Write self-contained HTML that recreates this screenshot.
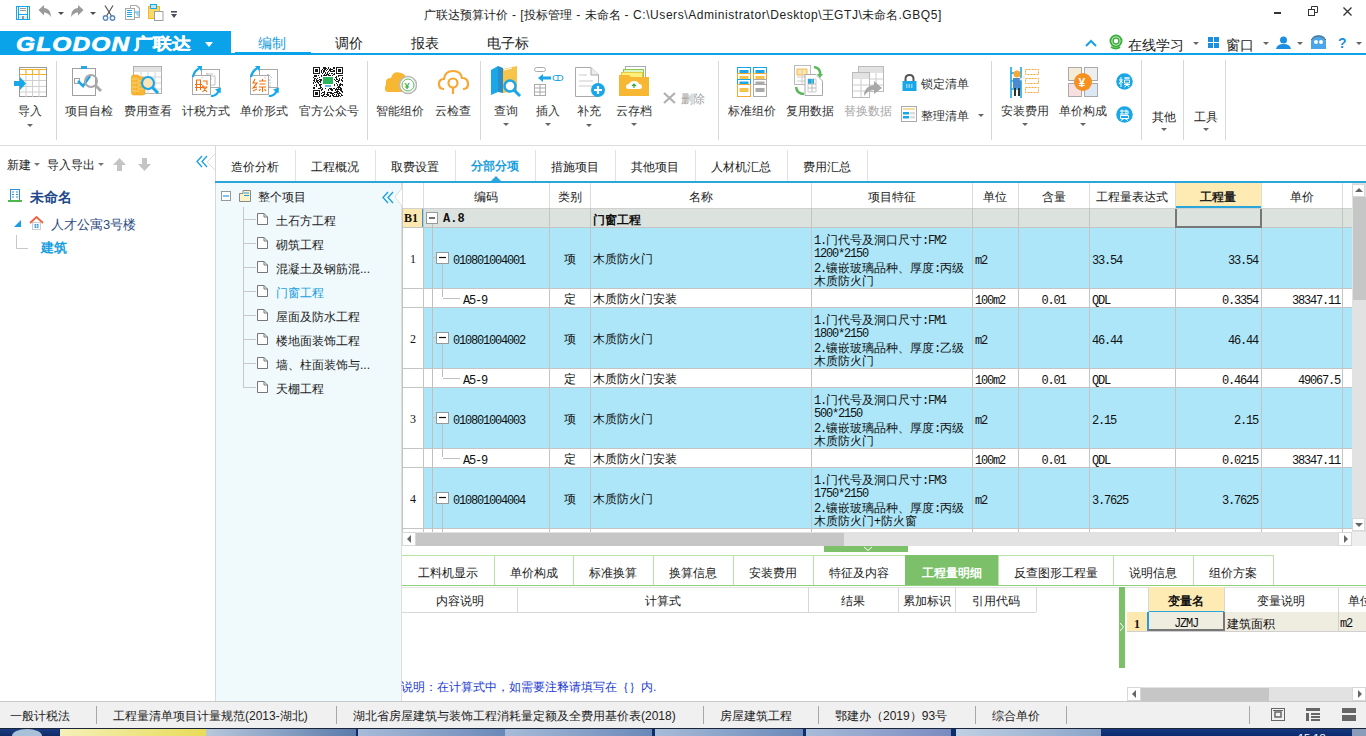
<!DOCTYPE html>
<html><head><meta charset="utf-8">
<style>
@font-face{font-family:"LSk";src:local("Liberation Sans");size-adjust:140%}
*{box-sizing:border-box}
html,body{margin:0;padding:0}
body{width:1366px;height:736px;position:relative;overflow:hidden;background:#fff;font-family:"Liberation Sans",sans-serif;font-size:12px;color:#222}
.a{position:absolute}
.t{position:absolute;white-space:nowrap;line-height:1}
.sep{position:absolute;width:1px;background:#d8d8d8}
.rb{position:absolute;top:104px;font-size:12px;color:#333;white-space:nowrap;line-height:12px;text-align:center}
.dd{position:absolute;width:0;height:0;border-left:3px solid transparent;border-right:3px solid transparent;border-top:3px solid #666}
.hl{position:absolute;height:1px;background:#c8c8c8}
.vl{position:absolute;width:1px;background:#c8c8c8}
.k{display:inline-block;width:1em;font-style:normal;text-align:center;font-family:"LSk","Liberation Sans",sans-serif}
</style></head><body>
<!-- TITLE BAR -->
<div class="a" style="left:0;top:0;width:1366px;height:31px;background:#fff"></div>
<div class="t" style="left:424px;top:8px;font-size:12px;color:#222;letter-spacing:0.57px"><i class="k">广</i><i class="k">联</i><i class="k">达</i><i class="k">预</i><i class="k">算</i><i class="k">计</i><i class="k">价</i> - [<i class="k">投</i><i class="k">标</i><i class="k">管</i><i class="k">理</i> - <i class="k">未</i><i class="k">命</i><i class="k">名</i> - C:\Users\Administrator\Desktop\<i class="k">王</i>GTJ\<i class="k">未</i><i class="k">命</i><i class="k">名</i>.GBQ5]</div>

<!-- TAB ROW -->
<div class="a" style="left:0;top:31px;width:231px;height:24px;background:#0aa3e9"></div>
<div class="a" style="left:0;top:53px;width:1366px;height:2px;background:#0aa3e9"></div>
<div class="a" style="left:235px;top:52px;width:76px;height:3px;background:#0aa3e9"></div>
<div class="t" style="left:258px;top:34px;font-size:14px;color:#1a9ee0"><i class="k">编</i><i class="k">制</i></div>
<div class="t" style="left:335px;top:34px;font-size:14px;color:#222"><i class="k">调</i><i class="k">价</i></div>
<div class="t" style="left:411px;top:34px;font-size:14px;color:#222"><i class="k">报</i><i class="k">表</i></div>
<div class="t" style="left:487px;top:34px;font-size:14px;color:#222"><i class="k">电</i><i class="k">子</i><i class="k">标</i></div>

<!-- RIBBON -->
<!-- quick access -->
<svg class="a" style="left:16px;top:6px" width="14" height="14" viewBox="0 0 14 14" shape-rendering="crispEdges"><rect x="0" y="0" width="14" height="14" fill="#12a8ec"/><rect x="1" y="1" width="12" height="12" fill="#fff"/><rect x="2" y="1" width="1" height="12" fill="#12a8ec"/><rect x="11" y="1" width="1" height="12" fill="#12a8ec"/><rect x="2" y="8" width="10" height="1" fill="#12a8ec"/><rect x="4" y="2" width="6" height="1" fill="#999"/><rect x="4" y="4" width="6" height="1" fill="#999"/><rect x="3" y="10" width="8" height="3" fill="#dbeefa"/><rect x="6" y="10" width="2" height="3" fill="#999"/></svg>
<svg class="a" style="left:38px;top:5px" width="34" height="14" viewBox="0 0 34 14"><path d="M0.5 5 L6 0 L6 3 Q13 3.5 13 12 Q10 7.5 6 7.5 L6 10.5 Z" fill="#9a9a9a"/><path d="M20 7 L26 7 L23 10 Z" fill="#4a4e5a"/></svg>
<svg class="a" style="left:70px;top:5px" width="34" height="14" viewBox="0 0 34 14"><path d="M13.5 5 L8 0 L8 3 Q1 3.5 1 12 Q4 7.5 8 7.5 L8 10.5 Z" fill="#9a9a9a"/><path d="M20 7 L26 7 L23 10 Z" fill="#4a4e5a"/></svg>
<svg class="a" style="left:102px;top:5px" width="14" height="16" viewBox="0 0 14 16"><path d="M3 0.5 L9.5 11 M11 0.5 L4.5 11" stroke="#555" stroke-width="1.2"/><circle cx="3.5" cy="13" r="2.2" fill="none" stroke="#5a86c0" stroke-width="1.4"/><circle cx="10.5" cy="13" r="2.2" fill="none" stroke="#5a86c0" stroke-width="1.4"/></svg>
<svg class="a" style="left:125px;top:4px" width="16" height="16" viewBox="0 0 16 16"><path d="M5.5 1.5 H12 L14.5 4 V13.5 H5.5 Z" fill="#fff" stroke="#a8a8a8"/><path d="M8 7 L14 7 L14 13 Z" fill="#8ad8f8"/><path d="M11.5 1.5 L14.5 4.5" stroke="#bbb" stroke-width="1.5"/><rect x="0.5" y="4.5" width="9" height="11" fill="#fff" stroke="#a8a8a8"/><path d="M2 6.5h5M2 8.5h5M2 10.5h5M2 12.5h5" stroke="#1aa7e8" stroke-width="1"/></svg>
<svg class="a" style="left:148px;top:4px" width="16" height="17" viewBox="0 0 16 17"><rect x="0.5" y="2.5" width="11" height="12" fill="#fcd86a" stroke="#f5b820"/><rect x="2.5" y="0.5" width="6" height="4" fill="#bfe8fa" stroke="#1aa7e8"/><rect x="6.5" y="7.5" width="8.5" height="9" fill="#fff" stroke="#a0a0a0"/></svg>
<svg class="a" style="left:171px;top:11px" width="6" height="7" viewBox="0 0 6 7"><rect x="0" y="0" width="6" height="1.6" fill="#4a4e5a"/><path d="M0 3 L6 3 L3 7 Z" fill="#4a4e5a"/></svg>

<!-- logo -->
<div class="t" style="left:16px;top:34px;font-size:20px;font-weight:bold;font-style:italic;color:#fff;letter-spacing:1px;transform-origin:0 0;transform:scaleX(1.22);-webkit-text-stroke:0.7px #fff">GLODON</div>
<div class="t" style="left:134px;top:34px;font-size:16px;font-weight:bold;color:#fff;transform-origin:0 0;transform:scaleX(1.18);-webkit-text-stroke:0.4px #fff"><i class="k">广</i><i class="k">联</i><i class="k">达</i></div>
<div class="dd" style="left:205px;top:42px;border-left-width:4px;border-right-width:4px;border-top:5px solid #fff"></div>

<!-- right side of tab row -->
<svg class="a" style="left:1085px;top:39px" width="12" height="8" viewBox="0 0 12 8"><path d="M1 7 L6 2 L11 7" fill="none" stroke="#1aa0e6" stroke-width="2"/></svg>
<svg class="a" style="left:1108px;top:34px" width="16" height="16" viewBox="0 0 16 16"><circle cx="8" cy="7" r="5.5" fill="none" stroke="#3cae3c" stroke-width="2"/><circle cx="8" cy="7" r="3" fill="none" stroke="#3cae3c" stroke-width="1.5"/><path d="M3 13 Q8 16 12 13" fill="none" stroke="#3cae3c" stroke-width="2"/></svg>
<div class="t" style="left:1128px;top:36px;font-size:14px;color:#222"><i class="k">在</i><i class="k">线</i><i class="k">学</i><i class="k">习</i></div>
<div class="dd" style="left:1193px;top:42px"></div>
<svg class="a" style="left:1208px;top:37px" width="12" height="11" viewBox="0 0 12 11"><rect x="0" y="0" width="5" height="5" fill="#1a8fe0"/><rect x="6" y="0" width="5" height="5" fill="#1a8fe0"/><rect x="0" y="6" width="5" height="5" fill="#1a8fe0"/><rect x="6" y="6" width="5" height="5" fill="#1a8fe0"/></svg>
<div class="t" style="left:1226px;top:36px;font-size:14px;color:#222"><i class="k">窗</i><i class="k">口</i></div>
<div class="dd" style="left:1263px;top:42px"></div>
<svg class="a" style="left:1276px;top:36px" width="15" height="13" viewBox="0 0 15 13"><circle cx="7.5" cy="4" r="3.5" fill="#1a8fe0"/><path d="M0 13 Q1 8 7.5 8 Q14 8 15 13 Z" fill="#1a8fe0"/></svg>
<div class="dd" style="left:1297px;top:42px"></div>
<svg class="a" style="left:1310px;top:34px" width="17" height="16" viewBox="0 0 17 16"><path d="M1 8 Q1 1 8.5 1 Q16 1 16 8 L16 15 L1 15 Z" fill="#4aa6e8"/><circle cx="6" cy="8" r="2" fill="#fff"/><circle cx="11" cy="8" r="2" fill="#fff"/><path d="M1 6 Q8.5 -2 16 6" fill="none" stroke="#666" stroke-width="1"/></svg>
<div class="t" style="left:1338px;top:36px;font-size:14px;color:#1a8fe0;font-weight:bold">?</div>
<div class="dd" style="left:1356px;top:42px"></div>

<!-- window controls -->
<div class="a" style="left:1274px;top:12px;width:7px;height:2px;background:#333"></div>
<svg class="a" style="left:1308px;top:6px" width="10" height="10" viewBox="0 0 10 10"><rect x="0.5" y="3.5" width="6" height="6" fill="none" stroke="#333"/><path d="M3.5 3.5V0.5H9.5V6.5H6.5" fill="none" stroke="#333"/></svg>
<svg class="a" style="left:1343px;top:7px" width="9" height="9" viewBox="0 0 9 9"><path d="M0.5 0.5L8.5 8.5M8.5 0.5L0.5 8.5" stroke="#333" stroke-width="1.3"/></svg>

<!-- ribbon separators -->
<div class="sep" style="left:56px;top:61px;height:79px"></div>
<div class="sep" style="left:367px;top:61px;height:79px"></div>
<div class="sep" style="left:480px;top:61px;height:79px"></div>
<div class="sep" style="left:718px;top:61px;height:79px"></div>
<div class="sep" style="left:991px;top:61px;height:79px"></div>
<div class="sep" style="left:1141px;top:60px;height:80px"></div>
<div class="sep" style="left:1183px;top:60px;height:80px"></div>
<div class="sep" style="left:1225px;top:60px;height:80px"></div>

<!-- ribbon items -->
<svg class="a" style="left:14px;top:67px" width="33" height="30" viewBox="0 0 33 30"><rect x="5.5" y="0.5" width="27" height="29" fill="#fff" stroke="#9a9a9a"/><path d="M6 7.5H32M6 13.5H32M6 19.5H32M6 25H32M12 7V30M18.5 7V30M25 7V30" stroke="#cfcfcf"/><path d="M6 2.5H32M6 7.5H32M12 2V8M18.5 2V8M25 2V8" stroke="#f5b12a" stroke-width="1.2"/><path d="M0 14 L6 14 L6 10 L12 16.5 L6 23 L6 19 L0 19 Z" fill="#18a7e8"/></svg>
<div class="rb" style="left:18px"><i class="k">导</i><i class="k">入</i></div>
<div class="dd" style="left:27px;top:124px"></div>

<svg class="a" style="left:72px;top:65px" width="32" height="32" viewBox="0 0 32 32"><rect x="0.5" y="3.5" width="23" height="27" fill="#fff" stroke="#a0a0a0"/><path d="M9 1 H15 V4 H9 Z" fill="#2aa6e6"/><rect x="2.5" y="13.5" width="5" height="5" fill="none" stroke="#a0a0a0"/><path d="M6 16 L11 21 L18 11" fill="none" stroke="#1aa7e8" stroke-width="2.5"/><circle cx="19" cy="16" r="6" fill="none" stroke="#a8a8a8" stroke-width="2"/><path d="M23 20 L29 26" stroke="#a8a8a8" stroke-width="3"/></svg>
<div class="rb" style="left:65px"><i class="k">项</i><i class="k">目</i><i class="k">自</i><i class="k">检</i></div>

<svg class="a" style="left:131px;top:66px" width="32" height="31" viewBox="0 0 32 31"><rect x="2.5" y="0.5" width="28" height="27" fill="#fff" stroke="#b0b0b0"/><rect x="3" y="1" width="27" height="5" fill="#e2e2e2"/><path d="M3 11H30M3 17H30M3 23H30M10 6V28M17 6V28M24 6V28" stroke="#d4d4d4"/><g fill="#f7b733" stroke="#f0a020" stroke-width="0.6"><rect x="0.5" y="9" width="8" height="20" rx="2"/><rect x="6" y="11" width="8" height="18" rx="2"/></g><path d="M1 13H8M1 17H8M1 21H8M1 25H8M6.5 15H13.5M6.5 19H13.5M6.5 23H13.5" stroke="#fcd98a" stroke-width="0.8"/><circle cx="17" cy="17" r="6" fill="#fde5b8" stroke="#1aa7e8" stroke-width="2.2"/><path d="M21 21 L27 27" stroke="#1aa7e8" stroke-width="3"/></svg>
<div class="rb" style="left:124px"><i class="k">费</i><i class="k">用</i><i class="k">查</i><i class="k">看</i></div>

<svg class="a" style="left:192px;top:66px" width="30" height="31" viewBox="0 0 30 31"><rect x="9.5" y="3.5" width="18" height="18" fill="#fff" stroke="#aaa"/><path d="M14 8h7M15 7v13M18 10h5v9h-4M16 13h4" stroke="#bbb" stroke-width="0.9" fill="none"/><rect x="0.5" y="9.5" width="18" height="19" fill="#fff" stroke="#aaa"/><path d="M9.5 9.5 L12 12.5 L9.5 12.5 Z" fill="#ddd"/><g stroke="#f26d0a" stroke-width="1.1" fill="none"><path d="M4.5 14v11M4.5 14h4v10M3 18.5h7M3 21.5h7"/><path d="M11 15h4v4M11 19 Q11 21 10 22M10.5 21h5M11 21 L15 26M15 21 L10.5 26"/></g><path d="M1 11 Q2 5 7 2.5" fill="none" stroke="#12a8ec" stroke-width="2.2"/><path d="M5 0 L10 0 L9.5 5.5 Z" fill="#12a8ec"/><path d="M19 30 Q25 30 27 24" fill="none" stroke="#12a8ec" stroke-width="2.2"/><path d="M23 23.5 L29 21.5 L28.5 27.5 Z" fill="#12a8ec"/></svg>
<div class="rb" style="left:182px"><i class="k">计</i><i class="k">税</i><i class="k">方</i><i class="k">式</i></div>

<svg class="a" style="left:250px;top:66px" width="30" height="31" viewBox="0 0 30 31"><rect x="9.5" y="3.5" width="18" height="18" fill="#fff" stroke="#aaa"/><path d="M14 12 L18 8 L22 12M15 14h6M15 17h6M15 20h6" stroke="#bbb" stroke-width="0.9" fill="none"/><rect x="0.5" y="9.5" width="18" height="19" fill="#fff" stroke="#aaa"/><path d="M14.5 9.5 L17 12.5 L14.5 12.5 Z" fill="#ddd"/><g stroke="#f26d0a" stroke-width="1.1" fill="none"><path d="M5 13 L3 17 L7 17 L3 22 L7 21M3 25 L7 23"/><path d="M9 15h7M12.5 13v2M9.5 18h6M9 21h7M12.5 21v5M10.5 23 L9 25M14.5 23 L16 25"/></g><path d="M1 11 Q2 5 7 2.5" fill="none" stroke="#12a8ec" stroke-width="2.2"/><path d="M5 0 L10 0 L9.5 5.5 Z" fill="#12a8ec"/><path d="M19 30 Q25 30 27 24" fill="none" stroke="#12a8ec" stroke-width="2.2"/><path d="M23 23.5 L29 21.5 L28.5 27.5 Z" fill="#12a8ec"/></svg>
<div class="rb" style="left:240px"><i class="k">单</i><i class="k">价</i><i class="k">形</i><i class="k">式</i></div>

<svg class="a" style="left:313px;top:67px" width="30" height="30" viewBox="0 0 30 30" shape-rendering="crispEdges"><rect width="30" height="30" fill="#fff"/><path d="M0 0h7v1h-7zM10 0h3v1h-3zM15 0h1v1h-1zM20 0h2v1h-2zM23 0h7v1h-7zM0 1h1v1h-1zM6 1h1v1h-1zM10 1h4v1h-4zM15 1h1v1h-1zM17 1h1v1h-1zM20 1h2v1h-2zM23 1h1v1h-1zM29 1h1v1h-1zM0 2h1v1h-1zM2 2h3v1h-3zM6 2h1v1h-1zM9 2h1v1h-1zM11 2h2v1h-2zM14 2h1v1h-1zM16 2h4v1h-4zM23 2h1v1h-1zM25 2h3v1h-3zM29 2h1v1h-1zM0 3h1v1h-1zM2 3h3v1h-3zM6 3h1v1h-1zM8 3h1v1h-1zM10 3h2v1h-2zM13 3h1v1h-1zM16 3h2v1h-2zM20 3h2v1h-2zM23 3h1v1h-1zM25 3h3v1h-3zM29 3h1v1h-1zM0 4h1v1h-1zM2 4h3v1h-3zM6 4h1v1h-1zM8 4h1v1h-1zM10 4h2v1h-2zM15 4h1v1h-1zM17 4h5v1h-5zM23 4h1v1h-1zM25 4h3v1h-3zM29 4h1v1h-1zM0 5h1v1h-1zM6 5h1v1h-1zM8 5h1v1h-1zM10 5h1v1h-1zM12 5h1v1h-1zM14 5h1v1h-1zM23 5h1v1h-1zM29 5h1v1h-1zM0 6h7v1h-7zM9 6h1v1h-1zM12 6h1v1h-1zM14 6h1v1h-1zM16 6h1v1h-1zM18 6h2v1h-2zM21 6h1v1h-1zM23 6h7v1h-7zM11 7h1v1h-1zM13 7h3v1h-3zM20 7h2v1h-2zM1 8h3v1h-3zM5 8h1v1h-1zM8 8h1v1h-1zM10 8h4v1h-4zM15 8h3v1h-3zM19 8h1v1h-1zM25 8h5v1h-5zM1 9h3v1h-3zM8 9h1v1h-1zM23 9h1v1h-1zM25 9h1v1h-1zM0 10h1v1h-1zM6 10h1v1h-1zM22 10h2v1h-2zM29 10h1v1h-1zM1 11h2v1h-2zM4 11h1v1h-1zM23 11h1v1h-1zM26 11h1v1h-1zM29 11h1v1h-1zM1 12h1v1h-1zM3 12h1v1h-1zM6 12h3v1h-3zM21 12h1v1h-1zM23 12h2v1h-2zM26 12h1v1h-1zM28 12h1v1h-1zM0 13h2v1h-2zM3 13h3v1h-3zM7 13h2v1h-2zM22 13h1v1h-1zM25 13h2v1h-2zM28 13h2v1h-2zM1 14h1v1h-1zM3 14h2v1h-2zM6 14h2v1h-2zM23 14h3v1h-3zM29 14h1v1h-1zM0 15h1v1h-1zM2 15h1v1h-1zM4 15h2v1h-2zM7 15h1v1h-1zM25 15h1v1h-1zM0 16h1v1h-1zM5 16h1v1h-1zM23 16h1v1h-1zM27 16h1v1h-1zM3 17h1v1h-1zM6 17h3v1h-3zM21 17h1v1h-1zM24 17h1v1h-1zM26 17h4v1h-4zM1 18h1v1h-1zM3 18h1v1h-1zM6 18h2v1h-2zM21 18h1v1h-1zM24 18h1v1h-1zM26 18h2v1h-2zM29 18h1v1h-1zM3 19h1v1h-1zM7 19h1v1h-1zM25 19h2v1h-2zM0 20h2v1h-2zM7 20h2v1h-2zM24 20h4v1h-4zM0 21h2v1h-2zM5 21h3v1h-3zM9 21h1v1h-1zM12 21h1v1h-1zM16 21h3v1h-3zM20 21h2v1h-2zM23 21h1v1h-1zM25 21h1v1h-1zM27 21h2v1h-2zM8 22h2v1h-2zM15 22h1v1h-1zM17 22h3v1h-3zM22 22h7v1h-7zM0 23h7v1h-7zM8 23h1v1h-1zM15 23h1v1h-1zM18 23h2v1h-2zM22 23h1v1h-1zM24 23h1v1h-1zM27 23h2v1h-2zM0 24h1v1h-1zM6 24h1v1h-1zM11 24h1v1h-1zM23 24h3v1h-3zM28 24h2v1h-2zM0 25h1v1h-1zM2 25h3v1h-3zM6 25h1v1h-1zM9 25h3v1h-3zM14 25h5v1h-5zM21 25h4v1h-4zM26 25h1v1h-1zM29 25h1v1h-1zM0 26h1v1h-1zM2 26h3v1h-3zM6 26h1v1h-1zM8 26h1v1h-1zM11 26h1v1h-1zM14 26h1v1h-1zM17 26h4v1h-4zM24 26h4v1h-4zM0 27h1v1h-1zM2 27h3v1h-3zM6 27h1v1h-1zM10 27h2v1h-2zM13 27h3v1h-3zM19 27h1v1h-1zM21 27h1v1h-1zM23 27h1v1h-1zM25 27h1v1h-1zM28 27h1v1h-1zM0 28h1v1h-1zM6 28h1v1h-1zM8 28h3v1h-3zM14 28h2v1h-2zM17 28h1v1h-1zM19 28h2v1h-2zM23 28h1v1h-1zM25 28h2v1h-2zM28 28h2v1h-2zM0 29h7v1h-7zM9 29h1v1h-1zM11 29h3v1h-3zM16 29h2v1h-2zM20 29h6v1h-6zM27 29h1v1h-1z" fill="#1a1a1a"/><rect x="10" y="10" width="10" height="7" fill="#2ab55a"/><rect x="12" y="18" width="6" height="2" fill="#7ab0e0"/></svg>
<div class="rb" style="left:299px"><i class="k">官</i><i class="k">方</i><i class="k">公</i><i class="k">众</i><i class="k">号</i></div>

<svg class="a" style="left:385px;top:70px" width="32" height="26" viewBox="0 0 32 26"><path d="M3 22 Q-2 22 1 14 Q0 8 6 8 Q8 0 16 3 Q22 4 22 12 L22 22 Z" fill="#f7b733"/><circle cx="23" cy="15" r="8.5" fill="#fff" stroke="#b8b8b8" stroke-width="1.5"/><circle cx="23" cy="15" r="6" fill="#fff" stroke="#5cb85c" stroke-width="1"/><text x="19.5" y="19" font-size="9" fill="#3cae3c" font-weight="bold">¥</text></svg>
<div class="rb" style="left:376px"><i class="k">智</i><i class="k">能</i><i class="k">组</i><i class="k">价</i></div>

<svg class="a" style="left:438px;top:68px" width="31" height="28" viewBox="0 0 31 28"><path d="M6 21 Q1 21 1 16 Q1 11 6 11 Q7 3 15 3 Q23 3 24 10 Q30 10 30 16 Q30 21 25 21" fill="none" stroke="#f7a733" stroke-width="2.2"/><circle cx="15" cy="15" r="4.5" fill="none" stroke="#f7a733" stroke-width="2.2"/><path d="M15 19.5 V26" stroke="#f7a733" stroke-width="2.2"/></svg>
<div class="rb" style="left:435px"><i class="k">云</i><i class="k">检</i><i class="k">查</i></div>

<svg class="a" style="left:490px;top:65px" width="32" height="32" viewBox="0 0 32 32"><path d="M1 5 L8 1 L8 27 L1 30 Z" fill="#1aa7e8"/><path d="M8 1 L13 3 L13 28 L8 27 Z" fill="#2a8cc8"/><path d="M13 4 L22 2 L27 1 L27 26 L13 28 Z" fill="#f7c34a"/><path d="M14 5 L22 3" stroke="#fff"/><circle cx="20" cy="21" r="5.5" fill="#fff" stroke="#1aa7e8" stroke-width="2.5"/><path d="M24 25 L30 31" stroke="#1aa7e8" stroke-width="3"/></svg>
<div class="rb" style="left:494px"><i class="k">查</i><i class="k">询</i></div>
<div class="dd" style="left:503px;top:123px"></div>

<svg class="a" style="left:534px;top:67px" width="30" height="30" viewBox="0 0 30 30"><rect x="0.5" y="0.5" width="11" height="4" rx="2" fill="#fff" stroke="#aaa"/><rect x="0.5" y="17.5" width="11" height="11" fill="#fff" stroke="#aaa"/><path d="M1 21H11M1 25H11M6 18V28" stroke="#aaa"/><path d="M4 11 L9 7 L9 9.5 L17 9.5 L17 12.5 L9 12.5 L9 15 Z" fill="#1aa7e8"/><rect x="19" y="8.5" width="10" height="5" rx="2.5" fill="#fff" stroke="#1aa7e8"/><path d="M24 9V13" stroke="#1aa7e8"/></svg>
<div class="rb" style="left:536px"><i class="k">插</i><i class="k">入</i></div>
<div class="dd" style="left:545px;top:123px"></div>

<svg class="a" style="left:575px;top:67px" width="30" height="31" viewBox="0 0 30 31"><path d="M0.5 0.5 L16 0.5 L23.5 8 L23.5 29.5 L0.5 29.5 Z" fill="#fff" stroke="#aaa"/><path d="M16 0.5 V8 H23.5" fill="#eee" stroke="#aaa"/><path d="M4 8H12M4 14H18M4 19H18" stroke="#ddd" stroke-width="1.5"/><circle cx="23" cy="23" r="7" fill="#1aa7e8"/><path d="M23 19V27M19 23H27" stroke="#fff" stroke-width="2.2"/></svg>
<div class="rb" style="left:577px"><i class="k">补</i><i class="k">充</i></div>
<div class="dd" style="left:586px;top:124px"></div>

<svg class="a" style="left:619px;top:66px" width="31" height="31" viewBox="0 0 31 31"><rect x="6.5" y="0.5" width="20" height="14" fill="#fff" stroke="#aaa"/><rect x="4.5" y="3.5" width="20" height="12" fill="#e0f2c8" stroke="#8cc84a"/><rect x="2.5" y="6.5" width="21" height="10" fill="#fdf07a" stroke="#e8c840"/><path d="M0 9 L10 9 L12 11 L30 11 L30 30 L0 30 Z" fill="#f7b733"/><path d="M9 23 Q7 23 7 21 Q7 18 10 18 Q11 15 15 15 Q19 15 20 18 Q23 18 23 21 Q23 23 21 23 Z" fill="#fff"/><path d="M15 22V18M13 20L15 18L17 20" stroke="#3cae3c" stroke-width="1.2" fill="none"/></svg>
<div class="rb" style="left:616px"><i class="k">云</i><i class="k">存</i><i class="k">档</i></div>
<div class="dd" style="left:631px;top:123px"></div>

<svg class="a" style="left:663px;top:92px" width="13" height="12" viewBox="0 0 13 12"><path d="M1 1 L12 11 M12 1 L1 11" stroke="#b0b0b0" stroke-width="2.2"/></svg>
<div class="t" style="left:681px;top:92px;font-size:12px;color:#a0a0a0"><i class="k">删</i><i class="k">除</i></div>

<svg class="a" style="left:737px;top:67px" width="31" height="31" viewBox="0 0 31 31"><rect x="0.5" y="0.5" width="13" height="8" fill="#fff" stroke="#1aa7e8"/><rect x="2.5" y="3" width="9" height="3" fill="#1aa7e8"/><rect x="0.5" y="6.5" width="13" height="7" fill="#fff" stroke="#f7a733"/><rect x="2.5" y="9" width="9" height="3" fill="#f7c34a"/><rect x="0.5" y="12.5" width="13" height="6" fill="#fff" stroke="#1aa7e8"/><rect x="2.5" y="14.5" width="9" height="3" fill="#1aa7e8"/><rect x="0.5" y="17.5" width="13" height="12" fill="#fff" stroke="#f7a733"/><rect x="2.5" y="21" width="9" height="4" fill="#f7c34a"/><rect x="16.5" y="0.5" width="13" height="8" fill="#fff" stroke="#1aa7e8"/><rect x="18.5" y="3" width="9" height="3" fill="#1aa7e8"/><rect x="16.5" y="6.5" width="13" height="7" fill="#fff" stroke="#f7a733"/><rect x="18.5" y="9" width="9" height="3" fill="#f7c34a"/><rect x="16.5" y="12.5" width="13" height="6" fill="#fff" stroke="#aaa"/><rect x="18.5" y="14.5" width="9" height="3" fill="#aaa"/><rect x="16.5" y="17.5" width="13" height="12" fill="#fff" stroke="#aaa"/><rect x="18.5" y="21" width="9" height="4" fill="#aaa"/></svg>
<div class="rb" style="left:728px"><i class="k">标</i><i class="k">准</i><i class="k">组</i><i class="k">价</i></div>

<svg class="a" style="left:794px;top:65px" width="30" height="32" viewBox="0 0 30 32"><rect x="0.5" y="0.5" width="16" height="19" fill="#fff" stroke="#bbb"/><path d="M3 4H13V10H3Z" fill="#fde7a8" stroke="#f7a733" stroke-width="0.8"/><path d="M3 12H13M3 16H13M8 4V19" stroke="#ccc"/><path d="M11 9.5 L22 9.5 L28.5 16 L28.5 30.5 L11 30.5 Z" fill="#fff" stroke="#aaa"/><path d="M14 14H22V27H14Z" fill="none" stroke="#ccc"/><rect x="14" y="14" width="6" height="5" fill="#1aa7e8"/><path d="M14 19H22M14 23H22M18 14V27" stroke="#bbb"/><path d="M20 2 Q27 3 26 10" fill="none" stroke="#5cb85c" stroke-width="2.5"/><path d="M23 9 L26 13 L29 9 Z" fill="#5cb85c"/><path d="M2 22 Q3 29 10 29" fill="none" stroke="#5cb85c" stroke-width="2.5"/></svg>
<div class="rb" style="left:786px"><i class="k">复</i><i class="k">用</i><i class="k">数</i><i class="k">据</i></div>

<svg class="a" style="left:852px;top:66px" width="33" height="32" viewBox="0 0 33 32"><rect x="6.5" y="0.5" width="25" height="25" fill="#fff" stroke="#bbb"/><rect x="7" y="1" width="24" height="6" fill="#e2e2e2"/><rect x="0.5" y="6.5" width="17" height="25" fill="#fff" stroke="#bbb"/><rect x="1" y="7" width="16" height="6" fill="#e2e2e2"/><path d="M1 19H17M1 25H17M9 13V31M18 13H31M18 19H31M24 7V25" stroke="#ccc"/><path d="M12 30 Q12 20 22 19 L22 15 L30 22 L22 28 L22 24 Q16 24 12 30 Z" fill="#a8a8a8"/></svg>
<div class="rb" style="left:844px;color:#a8a8a8"><i class="k">替</i><i class="k">换</i><i class="k">数</i><i class="k">据</i></div>

<svg class="a" style="left:902px;top:74px" width="15" height="17" viewBox="0 0 15 17"><path d="M3.5 8 V5 Q3.5 1 7.5 1 Q11.5 1 11.5 5 V8" fill="none" stroke="#555" stroke-width="2"/><rect x="0.5" y="7" width="14" height="10" fill="#1aa7e8"/><path d="M4 11H11M4 13H11" stroke="#fff" stroke-dasharray="1.5 1"/></svg>
<div class="t" style="left:921px;top:77px;font-size:12px;color:#333"><i class="k">锁</i><i class="k">定</i><i class="k">清</i><i class="k">单</i></div>
<svg class="a" style="left:901px;top:106px" width="16" height="16" viewBox="0 0 16 16"><rect x="0.5" y="0.5" width="15" height="15" fill="#fff" stroke="#aaa"/><rect x="2" y="2" width="12" height="2" fill="#f5dca0"/><rect x="2" y="6" width="6" height="2.5" fill="#1aa7e8"/><rect x="2" y="10" width="6" height="2.5" fill="#1aa7e8"/><rect x="9" y="6" width="5" height="2.5" fill="#ddd"/><rect x="9" y="10" width="5" height="2.5" fill="#ddd"/></svg>
<div class="t" style="left:921px;top:109px;font-size:12px;color:#333"><i class="k">整</i><i class="k">理</i><i class="k">清</i><i class="k">单</i></div>
<div class="dd" style="left:978px;top:114px"></div>

<svg class="a" style="left:1010px;top:67px" width="31" height="31" viewBox="0 0 31 31"><path d="M1 0V31M11 0V31M1 6H11M1 14H11M1 22H11" stroke="#1aa7e8" stroke-width="1.6"/><g fill="#fff" stroke="#f7a733" stroke-dasharray="2 1"><rect x="15.5" y="2.5" width="13" height="5"/><rect x="15.5" y="11.5" width="13" height="5"/><rect x="15.5" y="20.5" width="13" height="5"/></g><circle cx="7" cy="7" r="3.5" fill="#f7a733"/><rect x="3" y="11" width="8" height="10" fill="#4a8ad0"/><rect x="4" y="21" width="2" height="8" fill="#333"/><rect x="8" y="21" width="2" height="8" fill="#333"/><path d="M10 13 L15 9" stroke="#eee" stroke-width="2"/></svg>
<div class="rb" style="left:1001px"><i class="k">安</i><i class="k">装</i><i class="k">费</i><i class="k">用</i></div>
<div class="dd" style="left:1022px;top:123px"></div>

<svg class="a" style="left:1068px;top:67px" width="31" height="31" viewBox="0 0 31 31"><rect x="0.5" y="0.5" width="13" height="13" fill="#f5ecd8" stroke="#aaa"/><rect x="16.5" y="0.5" width="13" height="13" fill="#eee" stroke="#aaa"/><rect x="0.5" y="16.5" width="13" height="13" fill="#f8e0e0" stroke="#aaa"/><rect x="16.5" y="16.5" width="13" height="13" fill="#dde8f5" stroke="#aaa"/><circle cx="15" cy="15" r="9" fill="#f7901e"/><text x="10.5" y="20" font-size="12" font-weight="bold" fill="#fff">¥</text></svg>
<div class="rb" style="left:1059px"><i class="k">单</i><i class="k">价</i><i class="k">构</i><i class="k">成</i></div>
<div class="dd" style="left:1080px;top:123px"></div>

<svg class="a" style="left:1116px;top:73px" width="17" height="17" viewBox="0 0 17 17"><circle cx="8.5" cy="8.5" r="8.3" fill="#1aa7e8"/><g stroke="#fff" stroke-width="1" fill="none"><path d="M5 4v10M3 7h4M5 8 L3 11M5 8 L7 10M8 5h6M10 4v2M12 4v2M8.5 7h5v3h-5zM8 11.5h6M11 10v2M11 12 L8.5 14M11 12 L13.5 14"/></g></svg>
<svg class="a" style="left:1116px;top:106px" width="17" height="17" viewBox="0 0 17 17"><circle cx="8.5" cy="8.5" r="8.3" fill="#1aa7e8"/><g stroke="#fff" stroke-width="1" fill="none"><path d="M4 5h8v3h-8M6 3.5v5M10 3.5v5M4.5 9.5h8v3h-8zM8 12.5 L5 14.5M9 12.5 L12 14.5"/></g></svg>

<div class="t" style="left:1152px;top:110px;font-size:12px;color:#222"><i class="k">其</i><i class="k">他</i></div>
<div class="dd" style="left:1161px;top:128px"></div>
<div class="t" style="left:1194px;top:110px;font-size:12px;color:#222"><i class="k">工</i><i class="k">具</i></div>
<div class="dd" style="left:1203px;top:128px"></div>

<div class="a" style="left:0;top:145px;width:1366px;height:1px;background:#dcdcdc"></div>

<!-- LEFT NAV -->
<div class="t" style="left:7px;top:158px;font-size:12px;color:#222"><i class="k">新</i><i class="k">建</i></div>
<div class="dd" style="left:34px;top:163px;border-top-color:#777"></div>
<div class="t" style="left:47px;top:158px;font-size:12px;color:#222"><i class="k">导</i><i class="k">入</i><i class="k">导</i><i class="k">出</i></div>
<div class="dd" style="left:98px;top:163px;border-top-color:#777"></div>
<svg class="a" style="left:113px;top:158px" width="13" height="13" viewBox="0 0 13 13"><path d="M6.5 0 L13 7 L9 7 L9 13 L4 13 L4 7 L0 7 Z" fill="#c4c4c4"/></svg>
<svg class="a" style="left:138px;top:158px" width="13" height="13" viewBox="0 0 13 13"><path d="M6.5 13 L13 6 L9 6 L9 0 L4 0 L4 6 L0 6 Z" fill="#c4c4c4"/></svg>
<svg class="a" style="left:196px;top:155px" width="14" height="13" viewBox="0 0 14 13"><path d="M6 1 L1 6.5 L6 12 M11 1 L6 6.5 L11 12" fill="none" stroke="#1a9ee0" stroke-width="1.3"/></svg>
<svg class="a" style="left:206px;top:153px" width="10" height="18" viewBox="0 0 10 18"><path d="M10 0 L1 9 L10 18" fill="#fff" stroke="#ddd"/></svg>

<svg class="a" style="left:8px;top:189px" width="14" height="13" viewBox="0 0 14 13"><rect x="2.5" y="0.5" width="9" height="11" fill="#fff" stroke="#2a8fd8"/><path d="M4 3h2M8 3h2M4 5.5h2M8 5.5h2M4 8h2M8 8h2" stroke="#2a8fd8"/><rect x="0" y="11" width="14" height="2" fill="#4cb84c"/></svg>
<div class="t" style="left:30px;top:188px;font-size:14px;font-weight:bold;color:#1e4a8a"><i class="k">未</i><i class="k">命</i><i class="k">名</i></div>
<svg class="a" style="left:14px;top:220px" width="7" height="7" viewBox="0 0 7 7"><path d="M7 0 L7 7 L0 7 Z" fill="#1a9ee0"/></svg>
<svg class="a" style="left:29px;top:216px" width="15" height="14" viewBox="0 0 15 14"><path d="M1 7 L7.5 1 L14 7" fill="none" stroke="#f06040" stroke-width="1.8"/><rect x="3.5" y="6.5" width="8" height="7" fill="#fff" stroke="#ccc"/><rect x="5.5" y="8" width="4" height="4" fill="#3a9ae0"/><path d="M7.5 8V12M5.5 10H9.5" stroke="#fff" stroke-width="0.6"/></svg>
<div class="t" style="left:51px;top:217px;font-size:13px;color:#2a4a80"><i class="k">人</i><i class="k">才</i><i class="k">公</i><i class="k">寓</i>3<i class="k">号</i><i class="k">楼</i></div>
<svg class="a" style="left:15px;top:235px" width="13" height="14" viewBox="0 0 13 14"><path d="M1.5 0 V13.5 H13" fill="none" stroke="#c8c8c8"/></svg>
<div class="t" style="left:41px;top:240px;font-size:13px;font-weight:bold;color:#1a9ee0"><i class="k">建</i><i class="k">筑</i></div>

<div class="a" style="left:215px;top:146px;width:1px;height:555px;background:#d8d8d8"></div>

<!-- TAB STRIP -->
<div class="a" style="left:216px;top:150px;width:1150px;height:31px;background:#fff"></div>
<div class="t" style="left:215px;top:160px;width:80px;text-align:center;font-size:12px;color:#222;"><i class="k">造</i><i class="k">价</i><i class="k">分</i><i class="k">析</i></div>
<div class="a" style="left:295px;top:150px;width:1px;height:31px;background:#e2e2e2"></div>
<div class="t" style="left:295px;top:160px;width:80px;text-align:center;font-size:12px;color:#222;"><i class="k">工</i><i class="k">程</i><i class="k">概</i><i class="k">况</i></div>
<div class="a" style="left:375px;top:150px;width:1px;height:31px;background:#e2e2e2"></div>
<div class="t" style="left:375px;top:160px;width:80px;text-align:center;font-size:12px;color:#222;"><i class="k">取</i><i class="k">费</i><i class="k">设</i><i class="k">置</i></div>
<div class="a" style="left:455px;top:150px;width:1px;height:31px;background:#e2e2e2"></div>
<div class="t" style="left:455px;top:159px;width:80px;text-align:center;font-size:12px;color:#1a9ee0;font-weight:bold;"><i class="k">分</i><i class="k">部</i><i class="k">分</i><i class="k">项</i></div>
<div class="a" style="left:535px;top:150px;width:1px;height:31px;background:#e2e2e2"></div>
<div class="t" style="left:535px;top:160px;width:80px;text-align:center;font-size:12px;color:#222;"><i class="k">措</i><i class="k">施</i><i class="k">项</i><i class="k">目</i></div>
<div class="a" style="left:615px;top:150px;width:1px;height:31px;background:#e2e2e2"></div>
<div class="t" style="left:615px;top:160px;width:80px;text-align:center;font-size:12px;color:#222;"><i class="k">其</i><i class="k">他</i><i class="k">项</i><i class="k">目</i></div>
<div class="a" style="left:695px;top:150px;width:1px;height:31px;background:#e2e2e2"></div>
<div class="t" style="left:695px;top:160px;width:92px;text-align:center;font-size:12px;color:#222;"><i class="k">人</i><i class="k">材</i><i class="k">机</i><i class="k">汇</i><i class="k">总</i></div>
<div class="a" style="left:787px;top:150px;width:1px;height:31px;background:#e2e2e2"></div>
<div class="t" style="left:787px;top:160px;width:80px;text-align:center;font-size:12px;color:#222;"><i class="k">费</i><i class="k">用</i><i class="k">汇</i><i class="k">总</i></div>
<div class="a" style="left:867px;top:150px;width:1px;height:31px;background:#e2e2e2"></div>
<svg class="a" style="left:491px;top:176px" width="10" height="5" viewBox="0 0 10 5"><path d="M0 5 L5 0 L10 5 Z" fill="#2aa6dc"/></svg>
<div class="a" style="left:215px;top:181px;width:1151px;height:2px;background:#2aa6dc"></div>

<!-- SUBPANEL -->
<div class="a" style="left:216px;top:183px;width:185px;height:518px;background:#f0fafd"></div>
<div class="a" style="left:401px;top:183px;width:1px;height:518px;background:#dedede"></div>


<svg class="a" style="left:221px;top:191px" width="10" height="10" viewBox="0 0 10 10"><rect x="0.5" y="0.5" width="9" height="9" fill="#fff" stroke="#999"/><path d="M2 5H8" stroke="#2a9be0" stroke-width="1.2"/></svg>
<svg class="a" style="left:239px;top:190px" width="13" height="12" viewBox="0 0 13 12"><path d="M0.5 3.5 H4 V0.5 H11.5 V11.5 H0.5 Z" fill="#fdf3c8" stroke="#888"/><path d="M5 3h5M5 5.5h5" stroke="#2a9be0"/></svg>
<div class="t" style="left:258px;top:190px;font-size:12px;color:#222"><i class="k">整</i><i class="k">个</i><i class="k">项</i><i class="k">目</i></div>
<svg class="a" style="left:382px;top:191px" width="12" height="13" viewBox="0 0 12 13"><path d="M6 1 L1 6.5 L6 12 M11 1 L6 6.5 L11 12" fill="none" stroke="#1a9ee0" stroke-width="1.3"/></svg>
<svg class="a" style="left:394px;top:188px" width="8" height="18" viewBox="0 0 8 18"><path d="M8 0 L1 9 L8 18" fill="#fff" stroke="#ddd"/></svg>
<div class="a" style="left:243px;top:207px;width:1px;height:181px;background:#c8c8c8"></div>
<div class="a" style="left:244px;top:219px;width:12px;height:1px;background:#c8c8c8"></div>
<svg class="a" style="left:257px;top:213px" width="11" height="12" viewBox="0 0 11 12"><path d="M0.5 0.5 H7 L10.5 4 V11.5 H0.5 Z" fill="#fff" stroke="#777"/><path d="M7 0.5 V4 H10.5" fill="none" stroke="#777"/></svg>
<div class="t" style="left:276px;top:214px;font-size:12px;color:#222"><i class="k">土</i><i class="k">石</i><i class="k">方</i><i class="k">工</i><i class="k">程</i></div>
<div class="a" style="left:244px;top:243px;width:12px;height:1px;background:#c8c8c8"></div>
<svg class="a" style="left:257px;top:237px" width="11" height="12" viewBox="0 0 11 12"><path d="M0.5 0.5 H7 L10.5 4 V11.5 H0.5 Z" fill="#fff" stroke="#777"/><path d="M7 0.5 V4 H10.5" fill="none" stroke="#777"/></svg>
<div class="t" style="left:276px;top:238px;font-size:12px;color:#222"><i class="k">砌</i><i class="k">筑</i><i class="k">工</i><i class="k">程</i></div>
<div class="a" style="left:244px;top:267px;width:12px;height:1px;background:#c8c8c8"></div>
<svg class="a" style="left:257px;top:261px" width="11" height="12" viewBox="0 0 11 12"><path d="M0.5 0.5 H7 L10.5 4 V11.5 H0.5 Z" fill="#fff" stroke="#777"/><path d="M7 0.5 V4 H10.5" fill="none" stroke="#777"/></svg>
<div class="t" style="left:276px;top:262px;font-size:12px;color:#222"><i class="k">混</i><i class="k">凝</i><i class="k">土</i><i class="k">及</i><i class="k">钢</i><i class="k">筋</i><i class="k">混</i>...</div>
<div class="a" style="left:244px;top:291px;width:12px;height:1px;background:#c8c8c8"></div>
<svg class="a" style="left:257px;top:285px" width="11" height="12" viewBox="0 0 11 12"><path d="M0.5 0.5 H7 L10.5 4 V11.5 H0.5 Z" fill="#fff" stroke="#777"/><path d="M7 0.5 V4 H10.5" fill="none" stroke="#777"/></svg>
<div class="t" style="left:276px;top:286px;font-size:12px;color:#1a9ee0"><i class="k">门</i><i class="k">窗</i><i class="k">工</i><i class="k">程</i></div>
<div class="a" style="left:244px;top:315px;width:12px;height:1px;background:#c8c8c8"></div>
<svg class="a" style="left:257px;top:309px" width="11" height="12" viewBox="0 0 11 12"><path d="M0.5 0.5 H7 L10.5 4 V11.5 H0.5 Z" fill="#fff" stroke="#777"/><path d="M7 0.5 V4 H10.5" fill="none" stroke="#777"/></svg>
<div class="t" style="left:276px;top:310px;font-size:12px;color:#222"><i class="k">屋</i><i class="k">面</i><i class="k">及</i><i class="k">防</i><i class="k">水</i><i class="k">工</i><i class="k">程</i></div>
<div class="a" style="left:244px;top:339px;width:12px;height:1px;background:#c8c8c8"></div>
<svg class="a" style="left:257px;top:333px" width="11" height="12" viewBox="0 0 11 12"><path d="M0.5 0.5 H7 L10.5 4 V11.5 H0.5 Z" fill="#fff" stroke="#777"/><path d="M7 0.5 V4 H10.5" fill="none" stroke="#777"/></svg>
<div class="t" style="left:276px;top:334px;font-size:12px;color:#222"><i class="k">楼</i><i class="k">地</i><i class="k">面</i><i class="k">装</i><i class="k">饰</i><i class="k">工</i><i class="k">程</i></div>
<div class="a" style="left:244px;top:363px;width:12px;height:1px;background:#c8c8c8"></div>
<svg class="a" style="left:257px;top:357px" width="11" height="12" viewBox="0 0 11 12"><path d="M0.5 0.5 H7 L10.5 4 V11.5 H0.5 Z" fill="#fff" stroke="#777"/><path d="M7 0.5 V4 H10.5" fill="none" stroke="#777"/></svg>
<div class="t" style="left:276px;top:358px;font-size:12px;color:#222"><i class="k">墙</i><i class="k">、</i><i class="k">柱</i><i class="k">面</i><i class="k">装</i><i class="k">饰</i><i class="k">与</i>...</div>
<div class="a" style="left:244px;top:387px;width:12px;height:1px;background:#c8c8c8"></div>
<svg class="a" style="left:257px;top:381px" width="11" height="12" viewBox="0 0 11 12"><path d="M0.5 0.5 H7 L10.5 4 V11.5 H0.5 Z" fill="#fff" stroke="#777"/><path d="M7 0.5 V4 H10.5" fill="none" stroke="#777"/></svg>
<div class="t" style="left:276px;top:382px;font-size:12px;color:#222"><i class="k">天</i><i class="k">棚</i><i class="k">工</i><i class="k">程</i></div>
<!-- GRID -->
<div class="a" style="left:402px;top:183px;width:950px;height:349px;background:#fff"></div>
<div class="t" style="left:423px;top:190px;width:126px;text-align:center;font-size:12px;color:#222;"><i class="k">编</i><i class="k">码</i></div>
<div class="t" style="left:549px;top:190px;width:41px;text-align:center;font-size:12px;color:#222;"><i class="k">类</i><i class="k">别</i></div>
<div class="t" style="left:590px;top:190px;width:221px;text-align:center;font-size:12px;color:#222;"><i class="k">名</i><i class="k">称</i></div>
<div class="t" style="left:811px;top:190px;width:161px;text-align:center;font-size:12px;color:#222;"><i class="k">项</i><i class="k">目</i><i class="k">特</i><i class="k">征</i></div>
<div class="t" style="left:972px;top:190px;width:46px;text-align:center;font-size:12px;color:#222;"><i class="k">单</i><i class="k">位</i></div>
<div class="t" style="left:1018px;top:190px;width:71px;text-align:center;font-size:12px;color:#222;"><i class="k">含</i><i class="k">量</i></div>
<div class="t" style="left:1089px;top:190px;width:86px;text-align:center;font-size:12px;color:#222;"><i class="k">工</i><i class="k">程</i><i class="k">量</i><i class="k">表</i><i class="k">达</i><i class="k">式</i></div>
<div class="a" style="left:1176px;top:183px;width:85px;height:25px;background:#fdebb3"></div>
<div class="a" style="left:1176px;top:206px;width:85px;height:2px;background:#2aa6dc"></div>
<div class="t" style="left:1175px;top:190px;width:86px;text-align:center;font-size:12px;color:#222;font-weight:bold;"><i class="k">工</i><i class="k">程</i><i class="k">量</i></div>
<div class="t" style="left:1261px;top:190px;width:81px;text-align:center;font-size:12px;color:#222;"><i class="k">单</i><i class="k">价</i></div>
<div class="a" style="left:423px;top:208px;width:929px;height:19px;background:#dce3df"></div>
<div class="a" style="left:403px;top:208px;width:20px;height:19px;background:#fde9b0"></div>
<div class="a" style="left:422px;top:208px;width:2px;height:19px;background:#2a9be0"></div>
<div class="t" style="left:404px;top:212px;font-family:'Liberation Serif',serif;font-size:12px;font-weight:bold;color:#111">B1</div>
<div class="a" style="left:424px;top:227px;width:928px;height:61px;background:#ade6f8"></div>
<div class="a" style="left:424px;top:307px;width:928px;height:61px;background:#ade6f8"></div>
<div class="a" style="left:424px;top:387px;width:928px;height:61px;background:#ade6f8"></div>
<div class="a" style="left:424px;top:467px;width:928px;height:61px;background:#ade6f8"></div>
<div class="a" style="left:402px;top:208px;width:950px;height:1px;background:#d0d0d0"></div>
<div class="a" style="left:402px;top:227px;width:950px;height:1px;background:#c4c4c4"></div>
<div class="a" style="left:402px;top:288px;width:950px;height:1px;background:#c4c4c4"></div>
<div class="a" style="left:402px;top:307px;width:950px;height:1px;background:#c4c4c4"></div>
<div class="a" style="left:402px;top:368px;width:950px;height:1px;background:#c4c4c4"></div>
<div class="a" style="left:402px;top:387px;width:950px;height:1px;background:#c4c4c4"></div>
<div class="a" style="left:402px;top:448px;width:950px;height:1px;background:#c4c4c4"></div>
<div class="a" style="left:402px;top:467px;width:950px;height:1px;background:#c4c4c4"></div>
<div class="a" style="left:402px;top:528px;width:950px;height:1px;background:#c4c4c4"></div>
<div class="a" style="left:402px;top:183px;width:1px;height:25px;background:#dcdcdc"></div>
<div class="a" style="left:402px;top:208px;width:1px;height:324px;background:#c4c4c4"></div>
<div class="a" style="left:423px;top:183px;width:1px;height:25px;background:#dcdcdc"></div>
<div class="a" style="left:423px;top:208px;width:1px;height:324px;background:#c4c4c4"></div>
<div class="a" style="left:549px;top:183px;width:1px;height:25px;background:#dcdcdc"></div>
<div class="a" style="left:549px;top:208px;width:1px;height:324px;background:#c4c4c4"></div>
<div class="a" style="left:590px;top:183px;width:1px;height:25px;background:#dcdcdc"></div>
<div class="a" style="left:590px;top:208px;width:1px;height:324px;background:#c4c4c4"></div>
<div class="a" style="left:811px;top:183px;width:1px;height:25px;background:#dcdcdc"></div>
<div class="a" style="left:811px;top:208px;width:1px;height:324px;background:#c4c4c4"></div>
<div class="a" style="left:972px;top:183px;width:1px;height:25px;background:#dcdcdc"></div>
<div class="a" style="left:972px;top:208px;width:1px;height:324px;background:#c4c4c4"></div>
<div class="a" style="left:1018px;top:183px;width:1px;height:25px;background:#dcdcdc"></div>
<div class="a" style="left:1018px;top:208px;width:1px;height:324px;background:#c4c4c4"></div>
<div class="a" style="left:1089px;top:183px;width:1px;height:25px;background:#dcdcdc"></div>
<div class="a" style="left:1089px;top:208px;width:1px;height:324px;background:#c4c4c4"></div>
<div class="a" style="left:1175px;top:183px;width:1px;height:25px;background:#dcdcdc"></div>
<div class="a" style="left:1175px;top:208px;width:1px;height:324px;background:#c4c4c4"></div>
<div class="a" style="left:1261px;top:183px;width:1px;height:25px;background:#dcdcdc"></div>
<div class="a" style="left:1261px;top:208px;width:1px;height:324px;background:#c4c4c4"></div>
<div class="a" style="left:1342px;top:183px;width:1px;height:25px;background:#dcdcdc"></div>
<div class="a" style="left:1342px;top:208px;width:1px;height:324px;background:#c4c4c4"></div>
<div class="a" style="left:432px;top:223px;width:1px;height:309px;background:#c0c0c0"></div>
<svg class="a" style="left:426px;top:212px" width="12" height="12" viewBox="0 0 12 12"><rect x="0.5" y="0.5" width="11" height="11" fill="#fff" stroke="#999"/><path d="M3 6H9" stroke="#111" stroke-width="1.2"/></svg>
<div class="t" style="left:443px;top:213px;font-family:'Liberation Mono',monospace;font-size:12px;font-weight:bold;color:#111">A.8</div>
<div class="t" style="left:593px;top:213px;font-size:12px;font-weight:bold;color:#111"><i class="k">门</i><i class="k">窗</i><i class="k">工</i><i class="k">程</i></div>
<div class="a" style="left:1175px;top:209px;width:87px;height:19px;border:2px solid #777;border-top:none"></div>
<div class="a" style="left:433px;top:257px;width:4px;height:1px;background:#c0c0c0"></div>
<svg class="a" style="left:436px;top:252px" width="13" height="12" viewBox="0 0 13 12"><rect x="0.5" y="0.5" width="12" height="11" fill="#fff" stroke="#999"/><path d="M3 5.5H10" stroke="#111" stroke-width="1.2"/></svg>
<div class="a" style="left:442px;top:264px;width:1px;height:33px;background:#c0c0c0"></div>
<div class="t" style="left:453px;top:255px;font-family:'Liberation Mono',monospace;font-size:12px;letter-spacing:-1.2px;color:#111">010801004001</div>
<div class="t" style="left:403px;top:253px;width:20px;text-align:center;font-family:'Liberation Serif',serif;font-size:12px;color:#111">1</div>
<div class="t" style="left:549px;top:252px;width:41px;text-align:center;font-size:12px;color:#111"><i class="k">项</i></div>
<div class="t" style="left:593px;top:252px;font-size:12px;color:#111"><i class="k">木</i><i class="k">质</i><i class="k">防</i><i class="k">火</i><i class="k">门</i></div>
<div class="t" style="left:814px;top:233px;font-size:12px;color:#111"><span style="font-family:'Liberation Mono',monospace;font-size:12px;letter-spacing:-1.2px;">1.</span><i class="k">门</i><i class="k">代</i><i class="k">号</i><i class="k">及</i><i class="k">洞</i><i class="k">口</i><i class="k">尺</i><i class="k">寸</i><span style="font-family:'Liberation Mono',monospace;font-size:12px;letter-spacing:-1.2px;">:</span><span style="font-family:'Liberation Mono',monospace;font-size:12px;letter-spacing:-1.2px;">FM2</span></div>
<div class="t" style="left:814px;top:248px;font-family:'Liberation Mono',monospace;font-size:12px;letter-spacing:-1.2px;color:#111">1200*2150</div>
<div class="t" style="left:814px;top:261px;font-size:12px;color:#111"><span style="font-family:'Liberation Mono',monospace;font-size:12px;letter-spacing:-1.2px;">2.</span><i class="k">镶</i><i class="k">嵌</i><i class="k">玻</i><i class="k">璃</i><i class="k">品</i><i class="k">种</i><i class="k">、</i><i class="k">厚</i><i class="k">度</i><span style="font-family:'Liberation Mono',monospace;font-size:12px;letter-spacing:-1.2px;">:</span><i class="k">丙</i><i class="k">级</i></div>
<div class="t" style="left:814px;top:274px;font-size:12px;color:#111"><i class="k">木</i><i class="k">质</i><i class="k">防</i><i class="k">火</i><i class="k">门</i></div>
<div class="t" style="left:975px;top:255px;font-family:'Liberation Mono',monospace;font-size:12px;letter-spacing:-1.2px;color:#111">m2</div>
<div class="t" style="left:1092px;top:255px;font-family:'Liberation Mono',monospace;font-size:12px;letter-spacing:-1.2px;color:#111">33.54</div>
<div class="t" style="left:1175px;top:255px;width:83px;text-align:right;font-family:'Liberation Mono',monospace;font-size:12px;letter-spacing:-1.2px;color:#111">33.54</div>
<div class="a" style="left:443px;top:298px;width:17px;height:1px;background:#c0c0c0"></div>
<div class="t" style="left:463px;top:295px;font-family:'Liberation Mono',monospace;font-size:12px;letter-spacing:-1.2px;color:#111">A5-9</div>
<div class="t" style="left:549px;top:292px;width:41px;text-align:center;font-size:12px;color:#111"><i class="k">定</i></div>
<div class="t" style="left:593px;top:292px;font-size:12px;color:#111"><i class="k">木</i><i class="k">质</i><i class="k">防</i><i class="k">火</i><i class="k">门</i><i class="k">安</i><i class="k">装</i></div>
<div class="t" style="left:975px;top:295px;font-family:'Liberation Mono',monospace;font-size:12px;letter-spacing:-1.2px;color:#111">100m2</div>
<div class="t" style="left:1018px;top:295px;width:71px;text-align:center;font-family:'Liberation Mono',monospace;font-size:12px;letter-spacing:-1.2px;color:#111">0.01</div>
<div class="t" style="left:1092px;top:295px;font-family:'Liberation Mono',monospace;font-size:12px;letter-spacing:-1.2px;color:#111">QDL</div>
<div class="t" style="left:1175px;top:295px;width:83px;text-align:right;font-family:'Liberation Mono',monospace;font-size:12px;letter-spacing:-1.2px;color:#111">0.3354</div>
<div class="t" style="left:1261px;top:295px;width:79px;text-align:right;font-family:'Liberation Mono',monospace;font-size:12px;letter-spacing:-1.2px;color:#111">38347.11</div>
<div class="a" style="left:433px;top:337px;width:4px;height:1px;background:#c0c0c0"></div>
<svg class="a" style="left:436px;top:332px" width="13" height="12" viewBox="0 0 13 12"><rect x="0.5" y="0.5" width="12" height="11" fill="#fff" stroke="#999"/><path d="M3 5.5H10" stroke="#111" stroke-width="1.2"/></svg>
<div class="a" style="left:442px;top:344px;width:1px;height:33px;background:#c0c0c0"></div>
<div class="t" style="left:453px;top:335px;font-family:'Liberation Mono',monospace;font-size:12px;letter-spacing:-1.2px;color:#111">010801004002</div>
<div class="t" style="left:403px;top:333px;width:20px;text-align:center;font-family:'Liberation Serif',serif;font-size:12px;color:#111">2</div>
<div class="t" style="left:549px;top:332px;width:41px;text-align:center;font-size:12px;color:#111"><i class="k">项</i></div>
<div class="t" style="left:593px;top:332px;font-size:12px;color:#111"><i class="k">木</i><i class="k">质</i><i class="k">防</i><i class="k">火</i><i class="k">门</i></div>
<div class="t" style="left:814px;top:313px;font-size:12px;color:#111"><span style="font-family:'Liberation Mono',monospace;font-size:12px;letter-spacing:-1.2px;">1.</span><i class="k">门</i><i class="k">代</i><i class="k">号</i><i class="k">及</i><i class="k">洞</i><i class="k">口</i><i class="k">尺</i><i class="k">寸</i><span style="font-family:'Liberation Mono',monospace;font-size:12px;letter-spacing:-1.2px;">:</span><span style="font-family:'Liberation Mono',monospace;font-size:12px;letter-spacing:-1.2px;">FM1</span></div>
<div class="t" style="left:814px;top:328px;font-family:'Liberation Mono',monospace;font-size:12px;letter-spacing:-1.2px;color:#111">1800*2150</div>
<div class="t" style="left:814px;top:341px;font-size:12px;color:#111"><span style="font-family:'Liberation Mono',monospace;font-size:12px;letter-spacing:-1.2px;">2.</span><i class="k">镶</i><i class="k">嵌</i><i class="k">玻</i><i class="k">璃</i><i class="k">品</i><i class="k">种</i><i class="k">、</i><i class="k">厚</i><i class="k">度</i><span style="font-family:'Liberation Mono',monospace;font-size:12px;letter-spacing:-1.2px;">:</span><i class="k">乙</i><i class="k">级</i></div>
<div class="t" style="left:814px;top:354px;font-size:12px;color:#111"><i class="k">木</i><i class="k">质</i><i class="k">防</i><i class="k">火</i><i class="k">门</i></div>
<div class="t" style="left:975px;top:335px;font-family:'Liberation Mono',monospace;font-size:12px;letter-spacing:-1.2px;color:#111">m2</div>
<div class="t" style="left:1092px;top:335px;font-family:'Liberation Mono',monospace;font-size:12px;letter-spacing:-1.2px;color:#111">46.44</div>
<div class="t" style="left:1175px;top:335px;width:83px;text-align:right;font-family:'Liberation Mono',monospace;font-size:12px;letter-spacing:-1.2px;color:#111">46.44</div>
<div class="a" style="left:443px;top:378px;width:17px;height:1px;background:#c0c0c0"></div>
<div class="t" style="left:463px;top:375px;font-family:'Liberation Mono',monospace;font-size:12px;letter-spacing:-1.2px;color:#111">A5-9</div>
<div class="t" style="left:549px;top:372px;width:41px;text-align:center;font-size:12px;color:#111"><i class="k">定</i></div>
<div class="t" style="left:593px;top:372px;font-size:12px;color:#111"><i class="k">木</i><i class="k">质</i><i class="k">防</i><i class="k">火</i><i class="k">门</i><i class="k">安</i><i class="k">装</i></div>
<div class="t" style="left:975px;top:375px;font-family:'Liberation Mono',monospace;font-size:12px;letter-spacing:-1.2px;color:#111">100m2</div>
<div class="t" style="left:1018px;top:375px;width:71px;text-align:center;font-family:'Liberation Mono',monospace;font-size:12px;letter-spacing:-1.2px;color:#111">0.01</div>
<div class="t" style="left:1092px;top:375px;font-family:'Liberation Mono',monospace;font-size:12px;letter-spacing:-1.2px;color:#111">QDL</div>
<div class="t" style="left:1175px;top:375px;width:83px;text-align:right;font-family:'Liberation Mono',monospace;font-size:12px;letter-spacing:-1.2px;color:#111">0.4644</div>
<div class="t" style="left:1261px;top:375px;width:79px;text-align:right;font-family:'Liberation Mono',monospace;font-size:12px;letter-spacing:-1.2px;color:#111">49067.5</div>
<div class="a" style="left:433px;top:417px;width:4px;height:1px;background:#c0c0c0"></div>
<svg class="a" style="left:436px;top:412px" width="13" height="12" viewBox="0 0 13 12"><rect x="0.5" y="0.5" width="12" height="11" fill="#fff" stroke="#999"/><path d="M3 5.5H10" stroke="#111" stroke-width="1.2"/></svg>
<div class="a" style="left:442px;top:424px;width:1px;height:33px;background:#c0c0c0"></div>
<div class="t" style="left:453px;top:415px;font-family:'Liberation Mono',monospace;font-size:12px;letter-spacing:-1.2px;color:#111">010801004003</div>
<div class="t" style="left:403px;top:413px;width:20px;text-align:center;font-family:'Liberation Serif',serif;font-size:12px;color:#111">3</div>
<div class="t" style="left:549px;top:412px;width:41px;text-align:center;font-size:12px;color:#111"><i class="k">项</i></div>
<div class="t" style="left:593px;top:412px;font-size:12px;color:#111"><i class="k">木</i><i class="k">质</i><i class="k">防</i><i class="k">火</i><i class="k">门</i></div>
<div class="t" style="left:814px;top:393px;font-size:12px;color:#111"><span style="font-family:'Liberation Mono',monospace;font-size:12px;letter-spacing:-1.2px;">1.</span><i class="k">门</i><i class="k">代</i><i class="k">号</i><i class="k">及</i><i class="k">洞</i><i class="k">口</i><i class="k">尺</i><i class="k">寸</i><span style="font-family:'Liberation Mono',monospace;font-size:12px;letter-spacing:-1.2px;">:</span><span style="font-family:'Liberation Mono',monospace;font-size:12px;letter-spacing:-1.2px;">FM4</span></div>
<div class="t" style="left:814px;top:408px;font-family:'Liberation Mono',monospace;font-size:12px;letter-spacing:-1.2px;color:#111">500*2150</div>
<div class="t" style="left:814px;top:421px;font-size:12px;color:#111"><span style="font-family:'Liberation Mono',monospace;font-size:12px;letter-spacing:-1.2px;">2.</span><i class="k">镶</i><i class="k">嵌</i><i class="k">玻</i><i class="k">璃</i><i class="k">品</i><i class="k">种</i><i class="k">、</i><i class="k">厚</i><i class="k">度</i><span style="font-family:'Liberation Mono',monospace;font-size:12px;letter-spacing:-1.2px;">:</span><i class="k">丙</i><i class="k">级</i></div>
<div class="t" style="left:814px;top:434px;font-size:12px;color:#111"><i class="k">木</i><i class="k">质</i><i class="k">防</i><i class="k">火</i><i class="k">门</i></div>
<div class="t" style="left:975px;top:415px;font-family:'Liberation Mono',monospace;font-size:12px;letter-spacing:-1.2px;color:#111">m2</div>
<div class="t" style="left:1092px;top:415px;font-family:'Liberation Mono',monospace;font-size:12px;letter-spacing:-1.2px;color:#111">2.15</div>
<div class="t" style="left:1175px;top:415px;width:83px;text-align:right;font-family:'Liberation Mono',monospace;font-size:12px;letter-spacing:-1.2px;color:#111">2.15</div>
<div class="a" style="left:443px;top:458px;width:17px;height:1px;background:#c0c0c0"></div>
<div class="t" style="left:463px;top:455px;font-family:'Liberation Mono',monospace;font-size:12px;letter-spacing:-1.2px;color:#111">A5-9</div>
<div class="t" style="left:549px;top:452px;width:41px;text-align:center;font-size:12px;color:#111"><i class="k">定</i></div>
<div class="t" style="left:593px;top:452px;font-size:12px;color:#111"><i class="k">木</i><i class="k">质</i><i class="k">防</i><i class="k">火</i><i class="k">门</i><i class="k">安</i><i class="k">装</i></div>
<div class="t" style="left:975px;top:455px;font-family:'Liberation Mono',monospace;font-size:12px;letter-spacing:-1.2px;color:#111">100m2</div>
<div class="t" style="left:1018px;top:455px;width:71px;text-align:center;font-family:'Liberation Mono',monospace;font-size:12px;letter-spacing:-1.2px;color:#111">0.01</div>
<div class="t" style="left:1092px;top:455px;font-family:'Liberation Mono',monospace;font-size:12px;letter-spacing:-1.2px;color:#111">QDL</div>
<div class="t" style="left:1175px;top:455px;width:83px;text-align:right;font-family:'Liberation Mono',monospace;font-size:12px;letter-spacing:-1.2px;color:#111">0.0215</div>
<div class="t" style="left:1261px;top:455px;width:79px;text-align:right;font-family:'Liberation Mono',monospace;font-size:12px;letter-spacing:-1.2px;color:#111">38347.11</div>
<div class="a" style="left:433px;top:497px;width:4px;height:1px;background:#c0c0c0"></div>
<svg class="a" style="left:436px;top:492px" width="13" height="12" viewBox="0 0 13 12"><rect x="0.5" y="0.5" width="12" height="11" fill="#fff" stroke="#999"/><path d="M3 5.5H10" stroke="#111" stroke-width="1.2"/></svg>
<div class="a" style="left:442px;top:504px;width:1px;height:33px;background:#c0c0c0"></div>
<div class="t" style="left:453px;top:495px;font-family:'Liberation Mono',monospace;font-size:12px;letter-spacing:-1.2px;color:#111">010801004004</div>
<div class="t" style="left:403px;top:493px;width:20px;text-align:center;font-family:'Liberation Serif',serif;font-size:12px;color:#111">4</div>
<div class="t" style="left:549px;top:492px;width:41px;text-align:center;font-size:12px;color:#111"><i class="k">项</i></div>
<div class="t" style="left:593px;top:492px;font-size:12px;color:#111"><i class="k">木</i><i class="k">质</i><i class="k">防</i><i class="k">火</i><i class="k">门</i></div>
<div class="t" style="left:814px;top:473px;font-size:12px;color:#111"><span style="font-family:'Liberation Mono',monospace;font-size:12px;letter-spacing:-1.2px;">1.</span><i class="k">门</i><i class="k">代</i><i class="k">号</i><i class="k">及</i><i class="k">洞</i><i class="k">口</i><i class="k">尺</i><i class="k">寸</i><span style="font-family:'Liberation Mono',monospace;font-size:12px;letter-spacing:-1.2px;">:</span><span style="font-family:'Liberation Mono',monospace;font-size:12px;letter-spacing:-1.2px;">FM3</span></div>
<div class="t" style="left:814px;top:488px;font-family:'Liberation Mono',monospace;font-size:12px;letter-spacing:-1.2px;color:#111">1750*2150</div>
<div class="t" style="left:814px;top:501px;font-size:12px;color:#111"><span style="font-family:'Liberation Mono',monospace;font-size:12px;letter-spacing:-1.2px;">2.</span><i class="k">镶</i><i class="k">嵌</i><i class="k">玻</i><i class="k">璃</i><i class="k">品</i><i class="k">种</i><i class="k">、</i><i class="k">厚</i><i class="k">度</i><span style="font-family:'Liberation Mono',monospace;font-size:12px;letter-spacing:-1.2px;">:</span><i class="k">丙</i><i class="k">级</i></div>
<div class="t" style="left:814px;top:514px;font-size:12px;color:#111"><i class="k">木</i><i class="k">质</i><i class="k">防</i><i class="k">火</i><i class="k">门</i>+<i class="k">防</i><i class="k">火</i><i class="k">窗</i></div>
<div class="t" style="left:975px;top:495px;font-family:'Liberation Mono',monospace;font-size:12px;letter-spacing:-1.2px;color:#111">m2</div>
<div class="t" style="left:1092px;top:495px;font-family:'Liberation Mono',monospace;font-size:12px;letter-spacing:-1.2px;color:#111">3.7625</div>
<div class="t" style="left:1175px;top:495px;width:83px;text-align:right;font-family:'Liberation Mono',monospace;font-size:12px;letter-spacing:-1.2px;color:#111">3.7625</div>
<div class="a" style="left:1352px;top:183px;width:14px;height:349px;background:#e2e2e2"></div>
<div class="a" style="left:1352px;top:184px;width:13px;height:13px;background:#fff;border:1px solid #d8d8d8"></div>
<svg class="a" style="left:1355px;top:187px" width="8" height="6" viewBox="0 0 8 6"><path d="M0 5 L4 1 L8 5 Z" fill="#666"/></svg>
<div class="a" style="left:1353px;top:197px;width:13px;height:103px;background:#c6c6c6"></div>
<div class="a" style="left:1352px;top:518px;width:13px;height:13px;background:#fff;border:1px solid #d8d8d8"></div>
<svg class="a" style="left:1355px;top:522px" width="8" height="6" viewBox="0 0 8 6"><path d="M0 1 L4 5 L8 1 Z" fill="#666"/></svg>
<div class="a" style="left:402px;top:532px;width:950px;height:14px;background:#e2e2e2"></div>
<div class="a" style="left:402px;top:532px;width:14px;height:14px;background:#fff;border:1px solid #d8d8d8"></div>
<svg class="a" style="left:406px;top:535px" width="6" height="8" viewBox="0 0 6 8"><path d="M5 0 L1 4 L5 8 Z" fill="#666"/></svg>
<div class="a" style="left:416px;top:533px;width:428px;height:13px;background:#c6c6c6"></div>
<div class="a" style="left:1338px;top:532px;width:14px;height:14px;background:#fff;border:1px solid #d8d8d8"></div>
<svg class="a" style="left:1343px;top:535px" width="6" height="8" viewBox="0 0 6 8"><path d="M1 0 L5 4 L1 8 Z" fill="#666"/></svg>
<div class="a" style="left:1352px;top:532px;width:14px;height:14px;background:#eee"></div>
<div class="a" style="left:402px;top:546px;width:964px;height:9px;background:#fff"></div>
<!-- /GRID -->
<!-- BOTTOM -->
<div class="a" style="left:824px;top:546px;width:84px;height:6px;background:#7cc16a"></div>
<svg class="a" style="left:862px;top:546px" width="12" height="6" viewBox="0 0 12 6"><path d="M2 1 L6 4.5 L10 1" fill="none" stroke="#fff" stroke-width="1"/></svg>
<div class="a" style="left:402px;top:555px;width:872px;height:1px;background:#b8e2a8"></div>
<div class="a" style="left:402px;top:585px;width:964px;height:1px;background:#8fd07a"></div>
<div class="a" style="left:402px;top:587px;width:964px;height:1px;background:#e4e4e4"></div>
<div class="t" style="left:402px;top:566px;width:92px;text-align:center;font-size:12px;color:#222"><i class="k">工</i><i class="k">料</i><i class="k">机</i><i class="k">显</i><i class="k">示</i></div>
<div class="a" style="left:494px;top:555px;width:1px;height:30px;background:#b8e2a8"></div>
<div class="t" style="left:494px;top:566px;width:79px;text-align:center;font-size:12px;color:#222"><i class="k">单</i><i class="k">价</i><i class="k">构</i><i class="k">成</i></div>
<div class="a" style="left:573px;top:555px;width:1px;height:30px;background:#b8e2a8"></div>
<div class="t" style="left:573px;top:566px;width:80px;text-align:center;font-size:12px;color:#222"><i class="k">标</i><i class="k">准</i><i class="k">换</i><i class="k">算</i></div>
<div class="a" style="left:653px;top:555px;width:1px;height:30px;background:#b8e2a8"></div>
<div class="t" style="left:653px;top:566px;width:80px;text-align:center;font-size:12px;color:#222"><i class="k">换</i><i class="k">算</i><i class="k">信</i><i class="k">息</i></div>
<div class="a" style="left:733px;top:555px;width:1px;height:30px;background:#b8e2a8"></div>
<div class="t" style="left:733px;top:566px;width:80px;text-align:center;font-size:12px;color:#222"><i class="k">安</i><i class="k">装</i><i class="k">费</i><i class="k">用</i></div>
<div class="a" style="left:813px;top:555px;width:1px;height:30px;background:#b8e2a8"></div>
<div class="t" style="left:813px;top:566px;width:92px;text-align:center;font-size:12px;color:#222"><i class="k">特</i><i class="k">征</i><i class="k">及</i><i class="k">内</i><i class="k">容</i></div>
<div class="a" style="left:905px;top:555px;width:1px;height:30px;background:#b8e2a8"></div>
<div class="a" style="left:905px;top:555px;width:93px;height:30px;background:#7cc16a"></div>
<div class="t" style="left:905px;top:566px;width:93px;text-align:center;font-size:12px;font-weight:bold;color:#fff"><i class="k">工</i><i class="k">程</i><i class="k">量</i><i class="k">明</i><i class="k">细</i></div>
<div class="a" style="left:998px;top:555px;width:1px;height:30px;background:#b8e2a8"></div>
<div class="t" style="left:998px;top:566px;width:115px;text-align:center;font-size:12px;color:#222"><i class="k">反</i><i class="k">查</i><i class="k">图</i><i class="k">形</i><i class="k">工</i><i class="k">程</i><i class="k">量</i></div>
<div class="a" style="left:1113px;top:555px;width:1px;height:30px;background:#b8e2a8"></div>
<div class="t" style="left:1113px;top:566px;width:80px;text-align:center;font-size:12px;color:#222"><i class="k">说</i><i class="k">明</i><i class="k">信</i><i class="k">息</i></div>
<div class="a" style="left:1193px;top:555px;width:1px;height:30px;background:#b8e2a8"></div>
<div class="t" style="left:1193px;top:566px;width:80px;text-align:center;font-size:12px;color:#222"><i class="k">组</i><i class="k">价</i><i class="k">方</i><i class="k">案</i></div>
<div class="a" style="left:1273px;top:555px;width:1px;height:30px;background:#b8e2a8"></div>
<div class="a" style="left:402px;top:612px;width:634px;height:1px;background:#d8d8d8"></div>
<div class="t" style="left:402px;top:594px;width:115px;text-align:center;font-size:12px;color:#222"><i class="k">内</i><i class="k">容</i><i class="k">说</i><i class="k">明</i></div>
<div class="a" style="left:517px;top:587px;width:1px;height:25px;background:#d8d8d8"></div>
<div class="t" style="left:517px;top:594px;width:291px;text-align:center;font-size:12px;color:#222"><i class="k">计</i><i class="k">算</i><i class="k">式</i></div>
<div class="a" style="left:808px;top:587px;width:1px;height:25px;background:#d8d8d8"></div>
<div class="t" style="left:808px;top:594px;width:90px;text-align:center;font-size:12px;color:#222"><i class="k">结</i><i class="k">果</i></div>
<div class="a" style="left:898px;top:587px;width:1px;height:25px;background:#d8d8d8"></div>
<div class="t" style="left:898px;top:594px;width:57px;text-align:center;font-size:12px;color:#222"><i class="k">累</i><i class="k">加</i><i class="k">标</i><i class="k">识</i></div>
<div class="a" style="left:955px;top:587px;width:1px;height:25px;background:#d8d8d8"></div>
<div class="t" style="left:955px;top:594px;width:81px;text-align:center;font-size:12px;color:#222"><i class="k">引</i><i class="k">用</i><i class="k">代</i><i class="k">码</i></div>
<div class="a" style="left:1036px;top:587px;width:1px;height:25px;background:#d8d8d8"></div>
<div class="t" style="left:401px;top:680px;font-size:12px;color:#1a3ad0"><i class="k">说</i><i class="k">明</i><i class="k">：</i><i class="k">在</i><i class="k">计</i><i class="k">算</i><i class="k">式</i><i class="k">中</i><i class="k">，</i><i class="k">如</i><i class="k">需</i><i class="k">要</i><i class="k">注</i><i class="k">释</i><i class="k">请</i><i class="k">填</i><i class="k">写</i><i class="k">在</i><i class="k">｛</i><i class="k">｝</i><i class="k">内</i>.</div>
<div class="a" style="left:1119px;top:587px;width:6px;height:81px;background:#7cc16a"></div>
<svg class="a" style="left:1119px;top:622px" width="6" height="10" viewBox="0 0 6 10"><path d="M1 1 L4.5 5 L1 9" fill="none" stroke="#fff" stroke-width="1"/></svg>
<div class="a" style="left:1148px;top:587px;width:76px;height:25px;background:#fdebb3"></div>
<div class="a" style="left:1148px;top:611px;width:76px;height:1px;background:#2aa6dc"></div>
<div class="t" style="left:1148px;top:594px;width:76px;text-align:center;font-size:12px;font-weight:bold;color:#111"><i class="k">变</i><i class="k">量</i><i class="k">名</i></div>
<div class="t" style="left:1224px;top:594px;width:114px;text-align:center;font-size:12px;color:#222"><i class="k">变</i><i class="k">量</i><i class="k">说</i><i class="k">明</i></div>
<div class="t" style="left:1348px;top:594px;font-size:12px;color:#222"><i class="k">单</i><i class="k">位</i></div>
<div class="a" style="left:1148px;top:587px;width:1px;height:44px;background:#d8d8d8"></div>
<div class="a" style="left:1224px;top:587px;width:1px;height:44px;background:#d8d8d8"></div>
<div class="a" style="left:1338px;top:587px;width:1px;height:44px;background:#d8d8d8"></div>
<div class="a" style="left:1127px;top:612px;width:21px;height:19px;background:#fde9b0"></div>
<div class="a" style="left:1148px;top:612px;width:218px;height:19px;background:#efece0"></div>
<div class="a" style="left:1127px;top:631px;width:239px;height:1px;background:#d0d0d0"></div>
<div class="a" style="left:1338px;top:612px;width:1px;height:19px;background:#d0d0d0"></div>
<div class="t" style="left:1134px;top:618px;font-family:'Liberation Serif',serif;font-size:12px;font-weight:bold;color:#111">1</div>
<div class="a" style="left:1147px;top:612px;width:78px;height:19px;border-left:2px solid #2a9be0;border-right:2px solid #777;border-bottom:2px solid #777"></div>
<div class="t" style="left:1148px;top:618px;width:76px;text-align:center;font-family:'Liberation Mono',monospace;font-size:12px;letter-spacing:-1.2px;color:#111">JZMJ</div>
<div class="t" style="left:1227px;top:617px;font-size:12px;color:#111"><i class="k">建</i><i class="k">筑</i><i class="k">面</i><i class="k">积</i></div>
<div class="t" style="left:1340px;top:618px;font-family:'Liberation Mono',monospace;font-size:12px;letter-spacing:-1.2px;color:#111">m2</div>
<div class="a" style="left:1127px;top:687px;width:239px;height:14px;background:#e2e2e2"></div>
<div class="a" style="left:1127px;top:687px;width:14px;height:14px;background:#fff;border:1px solid #d8d8d8"></div>
<svg class="a" style="left:1131px;top:690px" width="6" height="8" viewBox="0 0 6 8"><path d="M5 0 L1 4 L5 8 Z" fill="#666"/></svg>
<div class="a" style="left:1141px;top:688px;width:128px;height:13px;background:#c6c6c6"></div>
<div class="a" style="left:1352px;top:687px;width:14px;height:14px;background:#fff;border:1px solid #d8d8d8"></div>
<svg class="a" style="left:1357px;top:690px" width="6" height="8" viewBox="0 0 6 8"><path d="M1 0 L5 4 L1 8 Z" fill="#666"/></svg>
<!-- /BOTTOM -->
<!-- STATUS BAR -->
<div class="a" style="left:0;top:701px;width:1366px;height:1px;background:#c8c8c8"></div>
<div class="a" style="left:0;top:702px;width:1366px;height:26px;background:#f0f0f0"></div>

<!-- TASKBAR -->
<div class="a" style="left:0;top:728px;width:1366px;height:8px;background:#0c2d6b"></div>



































<!-- SBAR -->
<div class="a" style="left:96px;top:706px;width:1px;height:18px;background:#a8a8a8"></div>
<div class="a" style="left:336px;top:706px;width:1px;height:18px;background:#a8a8a8"></div>
<div class="a" style="left:703px;top:706px;width:1px;height:18px;background:#a8a8a8"></div>
<div class="a" style="left:818px;top:706px;width:1px;height:18px;background:#a8a8a8"></div>
<div class="a" style="left:975px;top:706px;width:1px;height:18px;background:#a8a8a8"></div>
<div class="a" style="left:1066px;top:706px;width:1px;height:18px;background:#a8a8a8"></div>
<div class="a" style="left:1249px;top:706px;width:1px;height:18px;background:#a8a8a8"></div>
<div class="t" style="left:10px;top:709px;font-size:12px;color:#222"><i class="k">一</i><i class="k">般</i><i class="k">计</i><i class="k">税</i><i class="k">法</i></div>
<div class="t" style="left:113px;top:709px;font-size:12px;color:#222"><i class="k">工</i><i class="k">程</i><i class="k">量</i><i class="k">清</i><i class="k">单</i><i class="k">项</i><i class="k">目</i><i class="k">计</i><i class="k">量</i><i class="k">规</i><i class="k">范</i>(2013-<i class="k">湖</i><i class="k">北</i>)</div>
<div class="t" style="left:353px;top:709px;font-size:12px;color:#222"><i class="k">湖</i><i class="k">北</i><i class="k">省</i><i class="k">房</i><i class="k">屋</i><i class="k">建</i><i class="k">筑</i><i class="k">与</i><i class="k">装</i><i class="k">饰</i><i class="k">工</i><i class="k">程</i><i class="k">消</i><i class="k">耗</i><i class="k">量</i><i class="k">定</i><i class="k">额</i><i class="k">及</i><i class="k">全</i><i class="k">费</i><i class="k">用</i><i class="k">基</i><i class="k">价</i><i class="k">表</i>(2018)</div>
<div class="t" style="left:720px;top:709px;font-size:12px;color:#222"><i class="k">房</i><i class="k">屋</i><i class="k">建</i><i class="k">筑</i><i class="k">工</i><i class="k">程</i></div>
<div class="t" style="left:835px;top:709px;font-size:12px;color:#222"><i class="k">鄂</i><i class="k">建</i><i class="k">办</i><i class="k">（</i>2019<i class="k">）</i>93<i class="k">号</i></div>
<div class="t" style="left:992px;top:709px;font-size:12px;color:#222"><i class="k">综</i><i class="k">合</i><i class="k">单</i><i class="k">价</i></div>
<svg class="a" style="left:1271px;top:708px" width="14" height="13" viewBox="0 0 14 13"><rect x="0.5" y="0.5" width="13" height="12" fill="none" stroke="#666"/><rect x="4" y="4" width="6" height="5" fill="none" stroke="#666" stroke-width="1.5"/><path d="M2 2.5H12" stroke="#666"/></svg>
<svg class="a" style="left:1306px;top:708px" width="14" height="13" viewBox="0 0 14 13"><rect x="0" y="0" width="14" height="3" fill="#666"/><rect x="0" y="5" width="3" height="8" fill="#666"/><rect x="5" y="5" width="9" height="2" fill="#666"/><rect x="5" y="8" width="9" height="2" fill="#666"/><rect x="5" y="11" width="9" height="2" fill="#666"/></svg>
<svg class="a" style="left:1342px;top:708px" width="14" height="13" viewBox="0 0 14 13"><rect x="0" y="0" width="14" height="5" fill="#666"/><rect x="0" y="7" width="14" height="6" fill="#666"/></svg>
<div class="a" style="left:0px;top:728px;width:59px;height:8px;background:linear-gradient(#1c3f86,#102a66)"></div>
<div class="a" style="left:60px;top:728px;width:146px;height:8px;background:linear-gradient(90deg,#f4f0b8,#e8dc58)"></div>
<div class="a" style="left:206px;top:728px;width:150px;height:8px;background:linear-gradient(90deg,#b8c8dc,#5a7aaa)"></div>
<div class="a" style="left:358px;top:728px;width:147px;height:8px;background:linear-gradient(90deg,#a8bcd8,#6a88b8)"></div>
<div class="a" style="left:505px;top:728px;width:147px;height:8px;background:linear-gradient(90deg,#a8bcd8,#6a88b8)"></div>
<div class="a" style="left:655px;top:728px;width:148px;height:8px;background:linear-gradient(90deg,#a8bcd8,#6a88b8)"></div>
<div class="a" style="left:806px;top:728px;width:145px;height:8px;background:linear-gradient(90deg,#a8bcd8,#7a8ac0)"></div>
<div class="a" style="left:956px;top:728px;width:145px;height:8px;background:linear-gradient(90deg,#c0d0e4,#8aa4c8)"></div>
<div class="a" style="left:1101px;top:728px;width:251px;height:8px;background:linear-gradient(#1a3a80,#0a2a70)"></div>
<div class="a" style="left:1352px;top:728px;width:14px;height:8px;background:#8a9cb8"></div>
<div class="a" style="left:12px;top:729px;width:30px;height:14px;border-radius:50%;background:#a8c0d8"></div>
<div class="a" style="left:0;top:728px;width:1366px;height:1px;background:#1c2438"></div>
<div class="t" style="left:1298px;top:733px;font-size:11px;color:#fff">15:18</div>
<!-- /SBAR -->
</body></html>
